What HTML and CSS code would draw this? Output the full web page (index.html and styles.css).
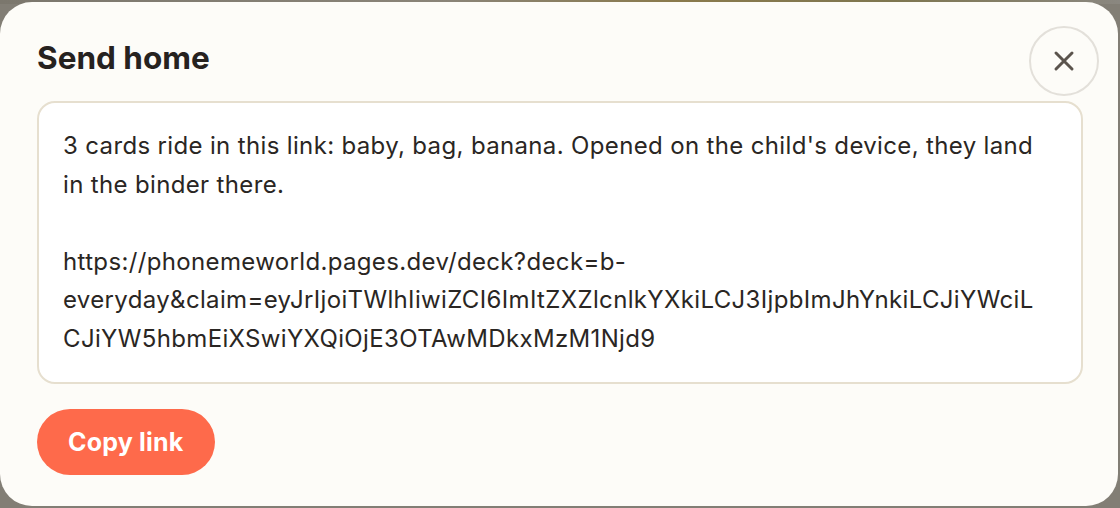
FILE: index.html
```html
<!DOCTYPE html>
<html lang="en">
<head>
<meta charset="utf-8">
<title>Send home</title>
<link rel="stylesheet" href="styles.css">
</head>
<body>
<div class="backdrop">
  <section class="dialog" role="dialog" aria-labelledby="dlg-title">
    <h2 class="dialog-title" id="dlg-title">Send home</h2>
    <button class="close-btn" aria-label="Close">
      <svg width="24" height="24" viewBox="0 0 24 24" aria-hidden="true">
        <path d="M4 4 L20 20 M20 4 L4 20" stroke="#5b544d" stroke-width="3" stroke-linecap="round" fill="none"/>
      </svg>
    </button>
    <div class="link-box">3 cards ride in this link: baby, bag, banana. Opened on the child's device, they land in the binder there.

https://phonemeworld.pages.dev/deck?deck=b-everyday&amp;claim=eyJrIjoiTWlhIiwiZCI6ImItZXZlcnlkYXkiLCJ3IjpbImJhYnkiLCJiYWciLCJiYW5hbmEiXSwiYXQiOjE3OTAwMDkxMzM1Njd9</div>
    <div class="actions">
      <button class="copy-btn">Copy link</button>
    </div>
  </section>
</div>
</body>
</html>
```

FILE: styles.css
```css
html, body {
  margin: 0;
  padding: 0;
  height: 100%;
}

body {
  background: #827e75;
  font-family: Inter, "Noto Sans", "Liberation Sans", sans-serif;
  overflow: hidden;
}

.backdrop {
  height: 100%;
  box-sizing: border-box;
  padding: 2px 2px 2px 0;
  display: flex;
  background: linear-gradient(90deg, #7b776d 0%, #8a8478 40%, #8a7a4c 60%, #7e7650 80%, #8a8780 100%);
  background-size: 100% 4px;
  background-repeat: no-repeat;
  background-color: #827e75;
}

.dialog {
  position: relative;
  flex: 1;
  background: #fdfcf8;
  border-radius: 32px;
  padding: 38px 35px 30px 37px;
  display: flex;
  flex-direction: column;
  gap: 25px;
}

.dialog-title {
  margin: 0;
  font-size: 31.5px;
  line-height: 36px;
  font-weight: 700;
  color: #26221f;
  letter-spacing: 0;
}

.close-btn {
  position: absolute;
  top: 24px;
  right: 19px;
  width: 70px;
  height: 70px;
  border-radius: 50%;
  border: 2px solid #e3e0da;
  background: transparent;
  display: flex;
  align-items: center;
  justify-content: center;
  padding: 0;
  cursor: pointer;
}

.link-box {
  height: 283px;
  box-sizing: border-box;
  background: #ffffff;
  border: 2px solid #e6dfcf;
  border-radius: 18px;
  padding: 24px 36px 22px 24px;
  font-size: 24px;
  line-height: 38.5px;
  letter-spacing: 0.35px;
  color: #2a2623;
  white-space: pre-wrap;
  overflow-wrap: anywhere;
}

.actions {
  display: flex;
}

.copy-btn {
  height: 66px;
  padding: 0 31px;
  border: none;
  border-radius: 33px;
  background: #fe6a4b;
  color: #ffffff;
  font-family: Inter, "Noto Sans", "Liberation Sans", sans-serif;
  font-size: 25px;
  font-weight: 700;
  letter-spacing: 0.2px;
  cursor: pointer;
}
```
